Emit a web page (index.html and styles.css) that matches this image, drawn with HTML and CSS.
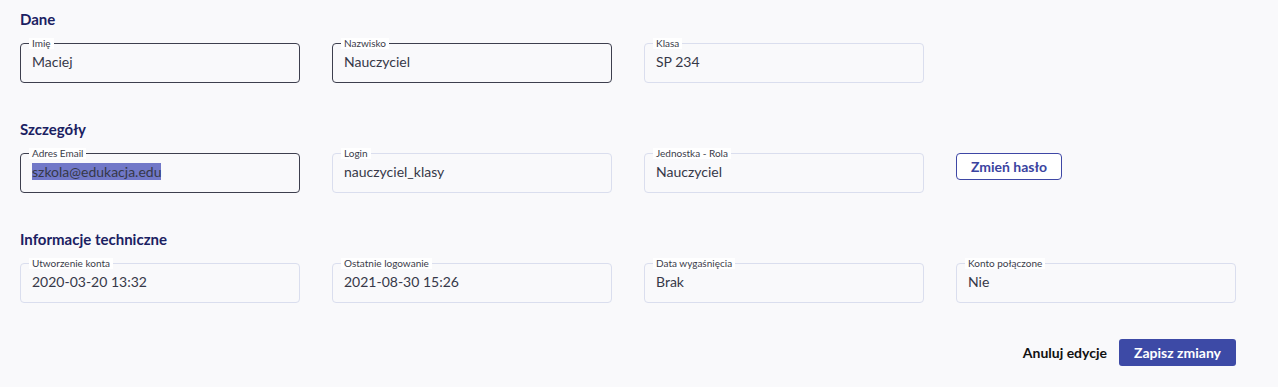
FILE: index.html
```html
<!DOCTYPE html>
<html lang="pl">
  <head>
    <meta charset="UTF-8" />
    <meta name="viewport" content="width=device-width, initial-scale=1.0" />
    <title>Profil użytkownika</title>
    <link rel="stylesheet" href="styles.css">
  </head>
  <body>
    <div class="page">
      <section class="section">
        <h2>Dane</h2>
        <div class="grid">
          <div class="field active">
            <span class="label">Imię</span>
            <span class="value">Maciej</span>
          </div>
          <div class="field active">
            <span class="label">Nazwisko</span>
            <span class="value">Nauczyciel</span>
          </div>
          <div class="field">
            <span class="label">Klasa</span>
            <span class="value">SP 234</span>
          </div>
        </div>
      </section>

      <section class="section">
        <h2>Szczegóły</h2>
        <div class="grid">
          <div class="field active">
            <span class="label">Adres Email</span>
            <span class="value"><span class="selected">szkola@edukacja.edu</span></span>
          </div>
          <div class="field">
            <span class="label">Login</span>
            <span class="value">nauczyciel_klasy</span>
          </div>
          <div class="field">
            <span class="label">Jednostka - Rola</span>
            <span class="value">Nauczyciel</span>
          </div>
          <div>
            <button class="btn-outline" type="button">Zmień hasło</button>
          </div>
        </div>
      </section>

      <section class="section">
        <h2>Informacje techniczne</h2>
        <div class="grid">
          <div class="field">
            <span class="label">Utworzenie konta</span>
            <span class="value">2020-03-20 13:32</span>
          </div>
          <div class="field">
            <span class="label">Ostatnie logowanie</span>
            <span class="value">2021-08-30 15:26</span>
          </div>
          <div class="field">
            <span class="label">Data wygaśnięcia</span>
            <span class="value">Brak</span>
          </div>
          <div class="field">
            <span class="label">Konto połączone</span>
            <span class="value">Nie</span>
          </div>
        </div>
      </section>

      <div class="actions">
        <button class="btn-text" type="button">Anuluj edycje</button>
        <button class="btn-primary" type="button">Zapisz zmiany</button>
      </div>
    </div>
  </body>
</html>
```

FILE: styles.css
```css
body {
  margin: 0;
  background-color: #f9f9fb;
  font-family: "Lato", "Liberation Sans", sans-serif;
  color: #333645;
}
.page {
  width: 1216px;
  padding: 9px 42px 0 20px;
}
.section {
  margin-bottom: 36px;
}
h2 {
  margin: 0 0 14px;
  font-size: 15px;
  line-height: 20px;
  font-weight: 700;
  color: #1b2162;
}
.grid {
  display: grid;
  grid-template-columns: repeat(4, 280px);
  column-gap: 32px;
}
.field {
  position: relative;
  box-sizing: border-box;
  height: 40px;
  padding: 8px 11px 0;
  border: 1px solid #dadeee;
  border-radius: 4px;
}
.field.active {
  border-color: #3d3f4e;
}
.label {
  position: absolute;
  top: -6px;
  left: 8px;
  padding: 0 3px;
  background-color: #fff;
  font-size: 10px;
  line-height: 11px;
  color: #3a3c4a;
}
.value {
  display: block;
  font-size: 14px;
  line-height: 20px;
  color: #363848;
}
.selected {
  background-color: #7178c8;
}
button {
  font-family: inherit;
  font-size: 14px;
  font-weight: 700;
  cursor: pointer;
}
.btn-outline {
  width: 106px;
  height: 27px;
  padding: 0;
  border: 1px solid #3e47a5;
  border-radius: 4px;
  background-color: #fff;
  color: #3a43a0;
}
.actions {
  display: flex;
  justify-content: flex-end;
  align-items: center;
  gap: 12px;
  margin-top: 3px;
}
.btn-text {
  padding: 0;
  border: none;
  background: none;
  color: #111;
}
.btn-primary {
  width: 117px;
  height: 27px;
  padding: 0;
  border: none;
  border-radius: 3px;
  background-color: #3d4aa6;
  color: #fff;
}
```
